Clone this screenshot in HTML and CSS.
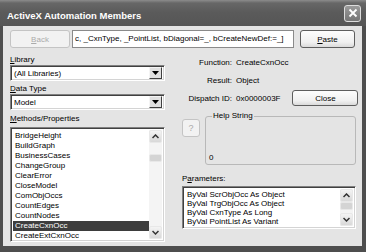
FILE: index.html
```html
<!DOCTYPE html>
<html lang="en">
<head>
	<meta charset="UTF-8">
	<title>ActiveX Automation Members</title>
	<link rel="stylesheet" href="styles.css">
</head>
<body>
	<div class="window">
		<div class="titlebar">
			<span class="title">ActiveX Automation Members</span>
			<span class="close-box">
				<svg width="10" height="10" viewBox="0 0 10 10"><path d="M1.5 1.5 L8.5 8.5 M8.5 1.5 L1.5 8.5" stroke="#fff" stroke-width="1.8" fill="none"/></svg>
			</span>
		</div>
		<div class="client">
			<div class="toolbar">
				<span class="btn disabled back"><u>B</u>ack</span>
				<div class="field">c, _CxnType, _PointList, bDiagonal=_, bCreateNewDef:=_]</div>
				<span class="btn paste"><u>P</u>aste</span>
			</div>
			<div class="main">
				<div class="left">
					<div class="label"><u>L</u>ibrary</div>
					<div class="combo">
						<span class="combo-text">(All Libraries)</span>
						<span class="drop"><svg width="7" height="4" viewBox="0 0 7 4"><path d="M0 0 H7 L3.5 4 Z" fill="#000"/></svg></span>
					</div>
					<div class="label gap-top"><u>D</u>ata Type</div>
					<div class="combo">
						<span class="combo-text">Model</span>
						<span class="drop"><svg width="7" height="4" viewBox="0 0 7 4"><path d="M0 0 H7 L3.5 4 Z" fill="#000"/></svg></span>
					</div>
					<div class="label gap-top2"><u>M</u>ethods/Properties</div>
					<div class="listbox methods">
						<ul class="items">
							<li>BridgeHeight</li>
							<li>BuildGraph</li>
							<li>BusinessCases</li>
							<li>ChangeGroup</li>
							<li>ClearError</li>
							<li>CloseModel</li>
							<li>ComObjOccs</li>
							<li>CountEdges</li>
							<li>CountNodes</li>
							<li class="selected">CreateCxnOcc</li>
							<li>CreateExtCxnOcc</li>
						</ul>
						<div class="vscroll">
							<span class="arrow"><svg width="7" height="5" viewBox="0 0 7 5"><path d="M0.5 4 L3.5 1 L6.5 4" stroke="#333" stroke-width="1.5" fill="none"/></svg></span>
							<span class="track">
								<span class="thumb thumb-methods"></span>
							</span>
							<span class="arrow"><svg width="7" height="5" viewBox="0 0 7 5"><path d="M0.5 1 L3.5 4 L6.5 1" stroke="#333" stroke-width="1.5" fill="none"/></svg></span>
						</div>
					</div>
				</div>
				<div class="right">
					<div class="info">
						<span class="key">Function:</span>
						<span class="val">CreateCxnOcc</span>
						<span></span>
						<span class="key">Result:</span>
						<span class="val">Object</span>
						<span></span>
						<span class="key">Dispatch ID:</span>
						<span class="val">0x0000003F</span>
						<span class="btn close">Close</span>
					</div>
					<div class="help-row">
						<span class="btn disabled help-btn">?</span>
						<fieldset class="help-group">
							<legend>Help String</legend>
							<div class="help-text">0</div>
						</fieldset>
					</div>
					<div class="label params-label">P<u>a</u>rameters:</div>
					<div class="listbox params">
						<ul class="items">
							<li>ByVal ScrObjOcc As Object</li>
							<li>ByVal TrgObjOcc As Object</li>
							<li>ByVal CxnType As Long</li>
							<li>ByVal PointList As Variant</li>
						</ul>
						<div class="vscroll">
							<span class="arrow"><svg width="7" height="5" viewBox="0 0 7 5"><path d="M0.5 4 L3.5 1 L6.5 4" stroke="#333" stroke-width="1.5" fill="none"/></svg></span>
							<span class="track">
								<span class="thumb"></span>
							</span>
							<span class="arrow"><svg width="7" height="5" viewBox="0 0 7 5"><path d="M0.5 1 L3.5 4 L6.5 1" stroke="#333" stroke-width="1.5" fill="none"/></svg></span>
						</div>
					</div>
				</div>
			</div>
		</div>
	</div>
</body>
</html>
```

FILE: styles.css
```css
*{
	margin:0;
	padding:0;
	box-sizing:border-box;
}
body{
	width:366px;
	height:252px;
	overflow:hidden;
	font-family:"Liberation Sans", Arial, sans-serif;
	font-size:8px;
	color:#000;
}
.window{
	width:366px;
	height:252px;
	background:#4e4e4e;
	display:flex;
	flex-direction:column;
}
.titlebar{
	height:26px;
	display:flex;
	align-items:center;
	justify-content:space-between;
	padding:0 5px 0 7px;
	background:linear-gradient(#8c8c8c 0, #676767 3px, #5b5b5b 12px, #555 26px);
}
.title{
	color:#fff;
	font-weight:bold;
	font-size:9.5px;
	padding-top:4px;
}
.close-box{
	width:17px;
	height:17px;
	border:1px solid #ddd;
	border-radius:3px;
	background:linear-gradient(#9a9a9a, #767676);
	display:flex;
	align-items:center;
	justify-content:center;
}
.client{
	flex:1;
	margin:0 4px 6px 3px;
	background:#e4e4e4;
	padding:4px 6px 0 7px;
}
.toolbar{
	display:flex;
	height:18px;
}
.btn{
	display:flex;
	align-items:center;
	justify-content:center;
	border:1px solid #5e5e5e;
	border-radius:3px;
	background:linear-gradient(#fdfdfd, #f0f0f0 70%, #dadada);
	height:18px;
}
.btn.disabled{
	border-color:#c4c4c4;
	color:#ababab;
	background:#f2f2f2;
}
.back{
	width:60px;
}
.field{
	width:222px;
	margin-left:2px;
	height:18px;
	background:#fff;
	border:1px solid #8a8a8a;
	line-height:16px;
	padding-left:2px;
	white-space:nowrap;
	overflow:hidden;
}
.paste{
	width:55px;
	margin-left:6px;
}
.main{
	display:flex;
	padding-top:5px;
}
.left{
	width:155px;
	padding-top:2px;
	display:flex;
	flex-direction:column;
}
.label{
	height:10px;
	line-height:10px;
}
.gap-top{
	margin-top:3px;
}
.gap-top2{
	margin-top:4px;
}
.combo{
	height:16px;
	background:#fff;
	border-top:1px solid #808080;
	border-left:1px solid #808080;
	border-right:1px solid #fff;
	border-bottom:1px solid #fff;
	box-shadow:inset 1px 1px #404040, inset -1px -1px #d4d4d4;
	display:flex;
	align-items:center;
	justify-content:space-between;
	padding:2px 2px 2px 3px;
}
.drop{
	width:13px;
	height:12px;
	background:#e0e0e0;
	border-top:1px solid #f4f4f4;
	border-left:1px solid #f4f4f4;
	border-right:1px solid #404040;
	border-bottom:1px solid #404040;
	display:flex;
	align-items:center;
	justify-content:center;
}
.listbox{
	background:#fff;
	border-top:1px solid #808080;
	border-left:1px solid #808080;
	border-right:1px solid #fff;
	border-bottom:1px solid #fff;
	box-shadow:inset 1px 1px #404040, inset -1px -1px #d4d4d4;
	display:flex;
	padding:2px;
	overflow:hidden;
}
.methods{
	margin-top:3px;
	height:115px;
}
.items{
	list-style:none;
	flex:1;
	overflow:hidden;
	padding-top:1px;
}
.methods .items li{
	height:10px;
	line-height:10px;
	padding-left:2px;
	white-space:nowrap;
}
.items .selected{
	background:#3d3d3d;
	color:#fff;
}
.vscroll{
	width:13px;
	display:flex;
	flex-direction:column;
	background:#f4f4f4;
}
.arrow{
	height:13px;
	border:1px solid #e8e8e8;
	border-radius:2px;
	background:linear-gradient(#f4f4f4, #d8d8d8);
	display:flex;
	align-items:center;
	justify-content:center;
}
.track{
	flex:1;
	display:flex;
	flex-direction:column;
}
.thumb{
	height:8px;
	border:1px solid #e8e8e8;
	border-radius:2px;
	background:#d4d4d4;
}
.thumb-methods{
	margin-top:11px;
}
.right{
	width:174px;
	margin-left:17px;
	display:flex;
	flex-direction:column;
}
.info{
	display:grid;
	grid-template-columns:50px 1fr 66px;
	grid-auto-rows:18px;
	column-gap:4px;
	align-items:center;
}
.key{
	text-align:right;
	white-space:nowrap;
}
.close{
	height:16px;
}
.help-row{
	display:flex;
	margin-top:4px;
}
.help-btn{
	width:18px;
	margin-top:8px;
	font-size:9px;
}
.help-group{
	margin-left:5px;
	width:151px;
	height:54px;
	min-width:0;
	border:1px solid #b8b8b8;
	border-radius:3px;
	padding:0 4px 0 3px;
	display:flex;
	flex-direction:column;
	justify-content:flex-end;
}
.help-group legend{
	padding:0 1px;
	margin-left:3px;
	line-height:10px;
	font-size:8px;
}
.help-text{
	line-height:10px;
	padding-bottom:1px;
}
.params-label{
	margin-top:9px;
}
.params{
	margin-top:2px;
	height:43px;
}
.params .items li{
	height:9px;
	line-height:9px;
	padding-left:2px;
	white-space:nowrap;
}
```
